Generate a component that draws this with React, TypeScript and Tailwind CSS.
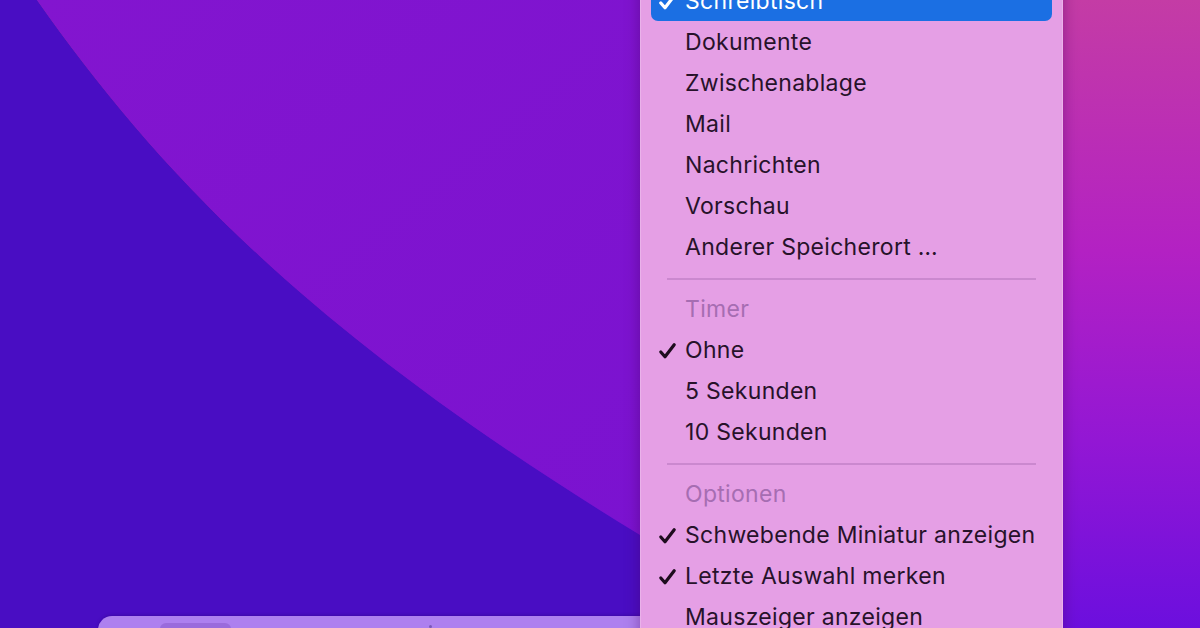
import React from 'react';

type Row =
  | { kind: 'item'; label: string; checked?: boolean; active?: boolean }
  | { kind: 'header'; label: string }
  | { kind: 'sep' };

const rows: Row[] = [
  { kind: 'item', label: 'Schreibtisch', checked: true, active: true },
  { kind: 'item', label: 'Dokumente' },
  { kind: 'item', label: 'Zwischenablage' },
  { kind: 'item', label: 'Mail' },
  { kind: 'item', label: 'Nachrichten' },
  { kind: 'item', label: 'Vorschau' },
  { kind: 'item', label: 'Anderer Speicherort …' },
  { kind: 'sep' },
  { kind: 'header', label: 'Timer' },
  { kind: 'item', label: 'Ohne', checked: true },
  { kind: 'item', label: '5 Sekunden' },
  { kind: 'item', label: '10 Sekunden' },
  { kind: 'sep' },
  { kind: 'header', label: 'Optionen' },
  { kind: 'item', label: 'Schwebende Miniatur anzeigen', checked: true },
  { kind: 'item', label: 'Letzte Auswahl merken', checked: true },
  { kind: 'item', label: 'Mauszeiger anzeigen' },
];

const Check = ({ color }: { color: string }) => (
  <svg width="19" height="18" viewBox="0 0 19 18" fill="none">
    <path d="M2.8 10 L7 14.8 L16.2 2.8" stroke={color} strokeWidth="3.2" strokeLinecap="round" strokeLinejoin="round" />
  </svg>
);

// macOS Monterey wallpaper
const Wallpaper = () => (
  <svg className="absolute inset-0" width="1200" height="628" viewBox="0 0 1200 628">
    <defs>
      <linearGradient id="right" x1="0" y1="0" x2="0" y2="1">
        <stop offset="0" stopColor="#c43ca5" />
        <stop offset="0.4" stopColor="#b321c3" />
        <stop offset="0.7" stopColor="#9317d4" />
        <stop offset="1" stopColor="#6c0fde" />
      </linearGradient>
      <linearGradient id="mid" x1="0" y1="0" x2="1" y2="1">
        <stop offset="0" stopColor="#8315cf" />
        <stop offset="1" stopColor="#7912d0" />
      </linearGradient>
    </defs>
    <rect width="1200" height="628" fill="url(#right)" />
    <path d="M37 0 C160 175 315 337 640 535 L780 620 L780 0 Z" fill="url(#mid)" />
    <path d="M0 0 L37 0 C160 175 315 337 640 535 L780 620 L780 628 L0 628 Z" fill="#490dc3" />
  </svg>
);

export default function App() {
  return (
    <div className="relative w-[1200px] h-[628px] overflow-hidden bg-[#490dc3]" style={{ fontFamily: 'Inter, "Noto Sans", sans-serif' }}>
      <Wallpaper />

      {/* screenshot toolbar, partly hidden */}
      <div className="absolute left-[98px] top-[616px] w-[900px] h-[40px] rounded-tl-[14px] bg-[#ad80ef] shadow-[0_-1px_3px_rgba(40,0,120,0.35)]">
        <div className="absolute left-[62px] top-[7px] w-[71px] h-[24px] rounded-md bg-[#9a6bdc]" />
        <div className="absolute left-[331px] top-[9px] w-[3px] h-[3px] rounded-full bg-[#7a58b8]" />
      </div>

      {/* options menu */}
      <div className="absolute left-[640px] top-[-19px] w-[423px] h-[680px] bg-[#e59fe5] border-x border-[#eab2ea] shadow-[0_0_14px_rgba(70,0,90,0.45)] px-[10px] flex flex-col">
        {rows.map((r, i) => {
          if (r.kind === 'sep') {
            return (
              <div key={i} className="h-[21px] flex items-center px-[16px]">
                <div className="h-[2px] w-full bg-[#cb88cf]" />
              </div>
            );
          }
          if (r.kind === 'header') {
            return (
              <div key={i} className="h-[41px] flex items-center pl-[34px] text-[23px] text-[#a66db2] tracking-[0.3px]">
                {r.label}
              </div>
            );
          }
          return (
            <div
              key={i}
              className={`flex items-center text-[23px] tracking-[0.3px] ${r.active ? 'bg-[#1b6fe3] text-white rounded-[7px] my-[1px] h-[39px]' : 'h-[41px] text-[#27122a]'}`}
            >
              <div className="w-[34px] pl-[7px] flex items-center">
                {r.checked && <Check color={r.active ? '#ffffff' : '#1e0c1e'} />}
              </div>
              <span>{r.label}</span>
            </div>
          );
        })}
      </div>
    </div>
  );
}
